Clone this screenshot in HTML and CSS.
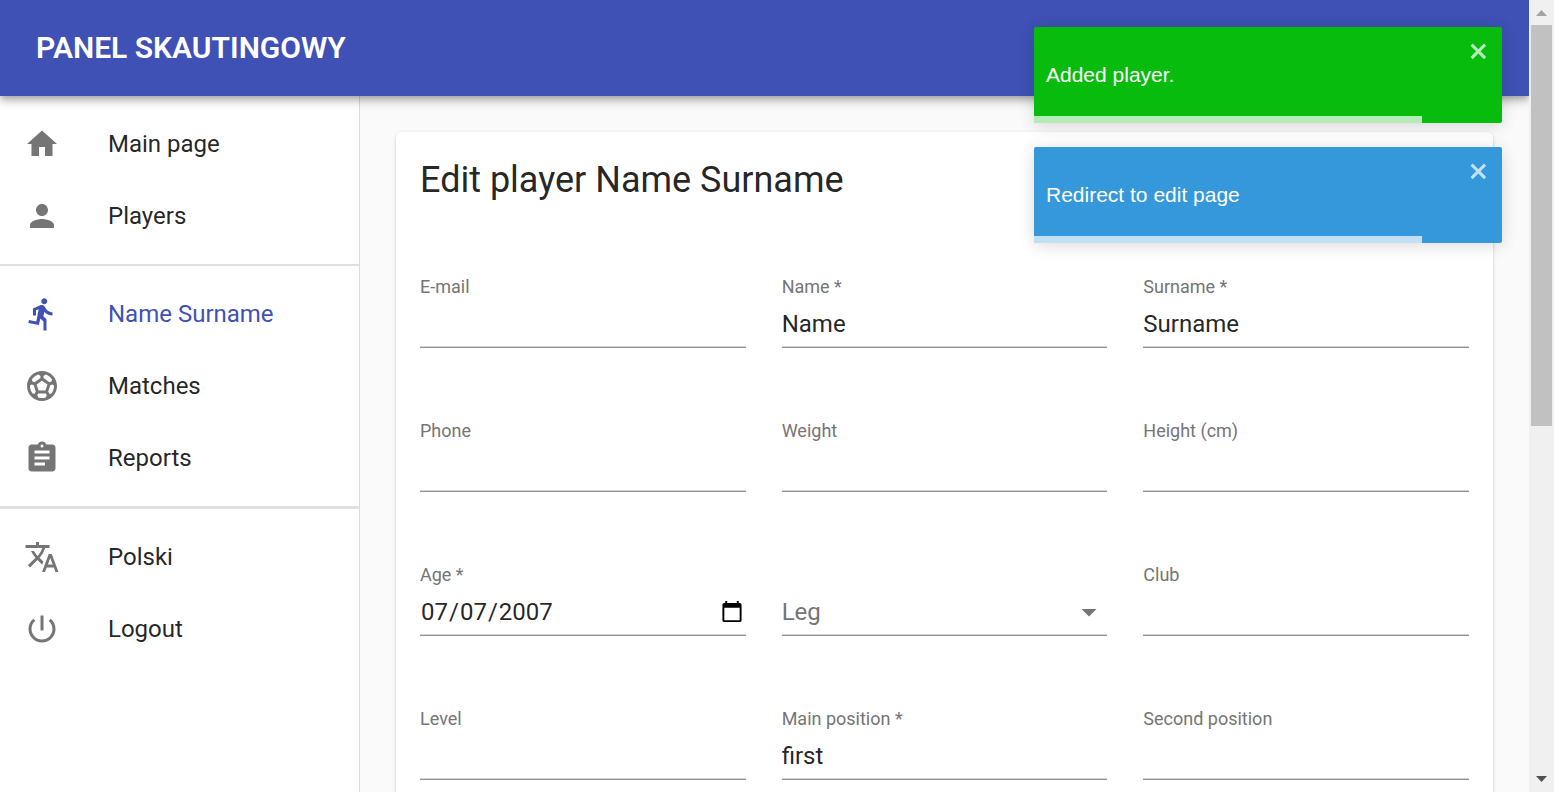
FILE: index.html
```html
<!DOCTYPE html>
<html lang="en">
<head>
<meta charset="utf-8">
<title>Panel skautingowy</title>
<link rel="stylesheet" href="styles.css">
</head>
<body>
<div class="window">
  <div class="app">
    <header class="topbar"><h1 class="brand">PANEL SKAUTINGOWY</h1></header>
    <div class="layout">
      <nav class="sidebar">
        <div class="nav-group">
          <a class="nav-item" href="#"><svg class="icon" viewBox="0 0 24 24"><path d="M10 20v-6h4v6h5v-8h3L12 3 2 12h3v8z"/></svg>Main page</a>
          <a class="nav-item" href="#"><svg class="icon" viewBox="0 0 24 24"><path d="M12 12c2.21 0 4-1.79 4-4s-1.79-4-4-4-4 1.79-4 4 1.79 4 4 4zm0 2c-2.67 0-8 1.34-8 4v2h16v-2c0-2.66-5.33-4-8-4z"/></svg>Players</a>
        </div>
        <hr class="divider">
        <div class="nav-group">
          <a class="nav-item nav-item--active" href="#"><svg class="icon" viewBox="0 0 24 24"><path d="M13.49 5.48c1.1 0 2-.9 2-2s-.9-2-2-2-2 .9-2 2 .9 2 2 2zm-3.6 13.9l1-4.4 2.1 2v6h2v-7.5l-2.1-2 .6-3c1.3 1.5 3.3 2.5 5.5 2.5v-2c-1.9 0-3.5-1-4.3-2.4l-1-1.6c-.4-.6-1-1-1.7-1-.3 0-.5.1-.8.1l-5.2 2.2v4.7h2v-3.4l1.8-.7-1.6 8.1-4.9-1-.4 2 7 1.4z"/></svg>Name Surname</a>
          <a class="nav-item" href="#"><svg class="icon" viewBox="0 0 24 24"><path d="M12 2C6.48 2 2 6.48 2 12s4.48 10 10 10 10-4.48 10-10S17.52 2 12 2zm1 3.3l1.35-.95c1.82.56 3.37 1.76 4.38 3.34l-.39 1.34-1.35.46L13 6.7V5.3zm-3.35-.95L11 5.3v1.4L7.01 9.49l-1.35-.46-.39-1.34c1.01-1.57 2.56-2.77 4.38-3.34zM7.08 17.11l-1.14.1C4.73 15.81 4 13.99 4 12c0-.12.01-.23.02-.35l1-.73L6.4 11.4l1.46 4.34-.78 1.37zm7.42 2.48c-.79.26-1.63.41-2.5.41s-1.71-.15-2.5-.41l-.69-1.49.64-1.1h5.11l.64 1.11-.7 1.48zM14.27 15H9.73l-1.35-4.02L12 8.44l3.63 2.54L14.27 15zm3.79 2.21l-1.14-.1-.79-1.37 1.46-4.34 1.39-.47 1 .73c.01.11.02.22.02.34 0 1.99-.73 3.81-1.94 5.21z"/></svg>Matches</a>
          <a class="nav-item" href="#"><svg class="icon" viewBox="0 0 24 24"><path d="M19 3h-4.18C14.4 1.84 13.3 1 12 1c-1.3 0-2.4.84-2.82 2H5c-1.1 0-2 .9-2 2v14c0 1.1.9 2 2 2h14c1.1 0 2-.9 2-2V5c0-1.1-.9-2-2-2zm-7 0c.55 0 1 .45 1 1s-.45 1-1 1-1-.45-1-1 .45-1 1-1zm2 14H7v-2h7v2zm3-4H7v-2h10v2zm0-4H7V7h10v2z"/></svg>Reports</a>
        </div>
        <hr class="divider divider--thick">
        <div class="nav-group">
          <a class="nav-item" href="#"><svg class="icon" viewBox="0 0 24 24"><path d="M12.87 15.07l-2.54-2.51.03-.03c1.74-1.94 2.98-4.17 3.71-6.53H17V4h-7V2H8v2H1v1.99h11.17C11.5 7.92 10.44 9.75 9 11.35 8.07 10.32 7.3 9.19 6.69 8h-2c.73 1.63 1.73 3.17 2.98 4.56l-5.09 5.02L4 19l5-5 3.11 3.11.76-2.04zM18.5 10h-2L12 22h2l1.12-3h4.75L21 22h2l-4.5-12zm-2.62 7l1.62-4.33L19.12 17h-3.24z"/></svg>Polski</a>
          <a class="nav-item" href="#"><svg class="icon" viewBox="0 0 24 24"><path d="M13 3h-2v10h2V3zm4.83 2.17l-1.42 1.42C17.99 7.86 19 9.81 19 12c0 3.87-3.13 7-7 7s-7-3.13-7-7c0-2.19 1.01-4.14 2.58-5.42L6.17 5.17C4.23 6.82 3 9.26 3 12c0 4.97 4.03 9 9 9s9-4.03 9-9c0-2.74-1.23-5.18-3.17-6.83z"/></svg>Logout</a>
        </div>
      </nav>
      <main class="content">
        <section class="card">
          <h2 class="card-title">Edit player Name Surname</h2>
          <form class="fields">
            <div class="field"><label class="label" for="email">E-mail</label><input class="input" id="email" type="text"></div>
            <div class="field"><label class="label" for="name">Name *</label><input class="input" id="name" type="text" value="Name"></div>
            <div class="field"><label class="label" for="surname">Surname *</label><input class="input" id="surname" type="text" value="Surname"></div>
            <div class="field"><label class="label" for="phone">Phone</label><input class="input" id="phone" type="text"></div>
            <div class="field"><label class="label" for="weight">Weight</label><input class="input" id="weight" type="text"></div>
            <div class="field"><label class="label" for="height">Height (cm)</label><input class="input" id="height" type="text"></div>
            <div class="field"><label class="label" for="age">Age *</label><input class="input" id="age" type="date" value="2007-07-07"></div>
            <div class="field field--select">
              <select class="input select" id="leg" aria-label="Leg"><option>Leg</option></select>
              <svg class="icon select-arrow" viewBox="0 0 24 24"><path d="M7 10l5 5 5-5z"/></svg>
            </div>
            <div class="field"><label class="label" for="club">Club</label><input class="input" id="club" type="text"></div>
            <div class="field"><label class="label" for="level">Level</label><input class="input" id="level" type="text"></div>
            <div class="field"><label class="label" for="position">Main position *</label><input class="input" id="position" type="text" value="first"></div>
            <div class="field"><label class="label" for="second">Second position</label><input class="input" id="second" type="text"></div>
          </form>
        </section>
      </main>
    </div>
    <div class="toasts">
      <div class="toast toast--success" role="alert">
        <p class="toast-text">Added player.</p>
        <button class="toast-close" type="button" aria-label="close"><svg class="close-icon" viewBox="0 0 14 16"><path d="M7.71 8.23l3.75 3.75-1.48 1.48-3.75-3.75-3.75 3.75L1 11.98l3.75-3.75L1 4.48 2.48 3l3.75 3.75L9.98 3l1.48 1.48-3.75 3.75z"/></svg></button>
        <div class="toast-progress"></div>
      </div>
      <div class="toast toast--info" role="alert">
        <p class="toast-text">Redirect to edit page</p>
        <button class="toast-close" type="button" aria-label="close"><svg class="close-icon" viewBox="0 0 14 16"><path d="M7.71 8.23l3.75 3.75-1.48 1.48-3.75-3.75-3.75 3.75L1 11.98l3.75-3.75L1 4.48 2.48 3l3.75 3.75L9.98 3l1.48 1.48-3.75 3.75z"/></svg></button>
        <div class="toast-progress"></div>
      </div>
    </div>
  </div>
  <div class="scrollbar" aria-hidden="true">
    <svg class="scroll-arrow scroll-arrow--up" viewBox="0 0 25 25"><path d="M7 16l5.5-6 5.500 6z"/></svg>
    <div class="scroll-track"><div class="scroll-thumb"></div></div>
    <svg class="scroll-arrow" viewBox="0 0 25 25"><path d="M7 9h11l-5.500 6z"/></svg>
  </div>
</div>
</body>
</html>
```

FILE: styles.css
```css
* {
  box-sizing: border-box;
}

body {
  margin: 0;
  background: #fafafa;
  color: rgba(0, 0, 0, 0.87);
  font-family: Roboto, "Liberation Sans", sans-serif;
  font-size: 24px;
}

.window {
  display: flex;
  height: 100vh;
  overflow: hidden;
}

.app {
  position: relative;
  display: flex;
  flex: 1;
  flex-direction: column;
  min-width: 0;
  overflow: hidden;
}

.topbar {
  position: relative;
  z-index: 1;
  display: flex;
  flex: none;
  align-items: center;
  min-height: 96px;
  padding: 0 36px;
  background: #3f51b5;
  color: #fff;
  box-shadow: 0 3px 6px -1px rgba(0, 0, 0, 0.2), 0 6px 8px rgba(0, 0, 0, 0.14), 0 1px 15px rgba(0, 0, 0, 0.12);
}

.brand {
  margin: 0;
  font-size: 30px;
  font-weight: 600;
  line-height: 48px;
}

.layout {
  display: flex;
  flex: 1;
  min-height: 0;
}

.sidebar {
  flex: none;
  width: 360px;
  border-right: 1px solid #dcdcdc;
  background: #fff;
}

.nav-group {
  padding: 12px 0;
}

.nav-item {
  display: flex;
  align-items: center;
  gap: 48px;
  height: 72px;
  padding: 0 24px;
  color: inherit;
  text-decoration: none;
}

.nav-item--active {
  color: #3f51b5;
}

.icon {
  flex: none;
  width: 36px;
  height: 36px;
  fill: #757575;
}

.nav-item--active .icon {
  fill: #3f51b5;
}

.divider {
  height: 2px;
  margin: 0;
  border: 0;
  background: #e0e0e0;
}

.divider--thick {
  height: 3px;
}

.content {
  flex: 1;
  min-width: 0;
  padding: 36px;
}

.card {
  padding: 24px;
  border-radius: 6px;
  background: #fff;
  box-shadow: 0 3px 2px -2px rgba(0, 0, 0, 0.2), 0 2px 2px rgba(0, 0, 0, 0.14), 0 1px 4px rgba(0, 0, 0, 0.12);
}

.card-title {
  margin: 0 0 72px;
  font-size: 36px;
  font-weight: 400;
  line-height: 48px;
}

.fields {
  display: grid;
  grid-template-columns: repeat(3, minmax(0, 1fr));
  gap: 72px 36px;
}

.field {
  display: grid;
  grid-template-rows: 23px 49px;
}

.label {
  color: #757575;
  font-size: 18px;
  line-height: 21px;
}

.input {
  width: 100%;
  height: 49px;
  margin: 0;
  padding: 2px 0 0;
  border: 0;
  border-bottom: 1px solid #949494;
  border-radius: 0;
  outline: 0;
  background: transparent;
  box-shadow: inset 0 -1px #d0d0d0;
  color: inherit;
  font: inherit;
}

.select {
  grid-area: 2 / 1;
  appearance: none;
  color: #757575;
}

.select-arrow {
  grid-area: 2 / 1;
  align-self: center;
  justify-self: end;
  pointer-events: none;
}

.toasts {
  position: absolute;
  top: 27px;
  right: 27px;
  z-index: 2;
  display: grid;
  gap: 24px;
  width: 468px;
}

.toast {
  position: relative;
  display: flex;
  align-items: center;
  min-height: 96px;
  padding: 12px;
  overflow: hidden;
  border-radius: 2px;
  color: #fff;
  font-family: "Liberation Sans", Arial, sans-serif;
  font-size: 21px;
  box-shadow: 0 2px 15px rgba(0, 0, 0, 0.1), 0 3px 22px rgba(0, 0, 0, 0.05);
}

.toast--success {
  background: #07bc0c;
}

.toast--info {
  background: #3498db;
}

.toast-text {
  flex: 1;
  margin: 0;
  line-height: 24px;
}

.toast-close {
  display: flex;
  align-self: flex-start;
  padding: 0;
  border: 0;
  background: transparent;
  opacity: 0.7;
}

.close-icon {
  width: 21px;
  height: 24px;
  fill: #fff;
}

.toast-progress {
  position: absolute;
  bottom: 0;
  left: 0;
  width: 83%;
  height: 7px;
  background: rgba(255, 255, 255, 0.7);
}

.scrollbar {
  display: flex;
  flex: none;
  flex-direction: column;
  width: 25px;
  background: #f0f0f0;
}

.scroll-arrow {
  flex: none;
  height: 25px;
  fill: #505050;
}

.scroll-arrow--up {
  fill: #a3a3a3;
}

.scroll-track {
  flex: 1;
  padding: 0 2px;
}

.scroll-thumb {
  height: 54%;
  background: #c1c1c1;
}
```
